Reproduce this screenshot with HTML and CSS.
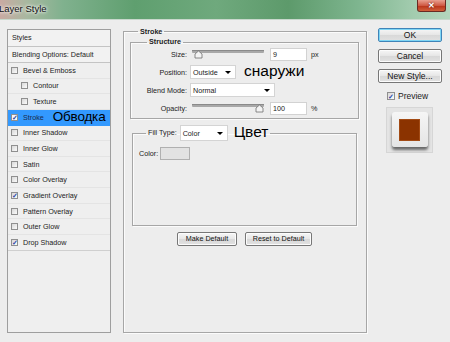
FILE: index.html
```html
<!doctype html>
<html>
  <head>
    <title>Layer Style</title>
    <link rel="stylesheet" href="styles.css">
  </head>
  <body>
    <div class="titlebar">
      <span class="title">Layer Style</span>
      <div class="close">&#x2715;</div>
    </div>

    <div class="content">
      <!--STYLES LIST-->
      <div class="styles-list">
        <div class="list-head">Styles</div>
        <div class="list-head">Blending Options: Default</div>
        <div class="item"><span class="check"></span>Bevel &amp; Emboss</div>
        <div class="item sub"><span class="check"></span>Contour</div>
        <div class="item sub"><span class="check"></span>Texture</div>
        <div class="item selected"><span class="check on">&#x2713;</span>Stroke<span class="note note-stroke">Обводка</span></div>
        <div class="item"><span class="check"></span>Inner Shadow</div>
        <div class="item"><span class="check"></span>Inner Glow</div>
        <div class="item"><span class="check"></span>Satin</div>
        <div class="item"><span class="check"></span>Color Overlay</div>
        <div class="item"><span class="check on">&#x2713;</span>Gradient Overlay</div>
        <div class="item"><span class="check"></span>Pattern Overlay</div>
        <div class="item"><span class="check"></span>Outer Glow</div>
        <div class="item last"><span class="check on">&#x2713;</span>Drop Shadow</div>
      </div>

      <!--SETTINGS-->
      <fieldset class="group outer">
        <legend class="outer-legend">Stroke</legend>

        <fieldset class="group structure">
          <legend>Structure</legend>
          <div class="row">
            <span class="label">Size:</span>
            <svg class="slider" width="72" height="10" viewBox="0 0 72 10">
              <rect x="0" y="1" width="72" height="3" rx="1" fill="#a8a8a8"/>
              <rect x="0" y="1" width="72" height="1" fill="#8a8a8a"/>
              <polygon points="3,9 3,5 6.5,2 10,5 10,9" fill="#f4f4f4" stroke="#707070" stroke-width="0.8"/>
            </svg>
            <span class="field">9</span>
            <span class="unit">px</span>
          </div>
          <div class="row">
            <span class="label">Position:</span>
            <span class="select select-pos">Outside<span class="arrow"></span></span>
            <span class="note note-pos">снаружи</span>
          </div>
          <div class="row">
            <span class="label">Blend Mode:</span>
            <span class="select select-blend">Normal<span class="arrow"></span></span>
          </div>
          <div class="row">
            <span class="label">Opacity:</span>
            <svg class="slider" width="72" height="10" viewBox="0 0 72 10">
              <rect x="0" y="1" width="72" height="3" rx="1" fill="#a8a8a8"/>
              <rect x="0" y="1" width="72" height="1" fill="#8a8a8a"/>
              <polygon points="64,9 64,5 67.5,2 71,5 71,9" fill="#f4f4f4" stroke="#707070" stroke-width="0.8"/>
            </svg>
            <span class="field">100</span>
            <span class="unit">%</span>
          </div>
        </fieldset>

        <fieldset class="group fill">
          <legend>
            <span class="legend-label">Fill Type:</span>
            <span class="select select-fill">Color<span class="arrow"></span></span>
            <span class="note note-fill">Цвет</span>
          </legend>
          <div class="fill-body">
            <div class="color-row">
              <span>Color:</span>
              <span class="swatch"></span>
            </div>
          </div>
        </fieldset>

        <div class="defaults">
          <div class="btn btn-small">Make Default</div>
          <div class="btn btn-small btn-reset">Reset to Default</div>
        </div>
      </fieldset>

      <!--ACTIONS-->
      <div class="actions">
        <div class="btn btn-ok">OK</div>
        <div class="btn">Cancel</div>
        <div class="btn">New Style...</div>
        <div class="preview-check"><span class="check on">&#x2713;</span>Preview</div>
        <div class="preview">
          <div class="preview-tile"><div class="preview-color"></div></div>
        </div>
      </div>
    </div>
  </body>
</html>
```

FILE: styles.css
```css
html {
  box-sizing: border-box;
}
*, *:before, *:after {
  box-sizing: inherit;
}

html, body {
  font-family: "Liberation Sans", Arial, sans-serif;
  width: 100%;
  height: 100%;
  margin: 0;
  padding: 0;
  background-color: #ededed;
  color: #222;
  overflow: hidden;
}

/* title bar */
.titlebar {
  height: 20px;
  display: flex;
  align-items: center;
  background: linear-gradient(90deg, #c9aaa2 0%, #a8b8a0 6%, #80b18e 14%, #5f9f6f 30%, #6fa97d 48%, #5d9a6b 64%, #7fb690 80%, #a3ccaf 92%, #b4d6bd 100%);
  border-bottom: 1px solid #c8d8cc;
  position: relative;
}
.title {
  font-size: 9.5px;
  margin-left: -1px;
  margin-top: -2px;
  color: #111;
  text-shadow: 0 0 3px #fff, 0 0 4px #fff;
}
.close {
  position: absolute;
  top: 0;
  left: 417px;
  width: 29px;
  height: 12px;
  border: 1px solid #6a2a22;
  border-top: none;
  border-radius: 0 0 3px 3px;
  background: linear-gradient(#e9a090, #cf5a44 50%, #b83218 51%, #d0603c);
  color: #fff;
  font-size: 8px;
  font-weight: bold;
  line-height: 11px;
  text-align: center;
  text-shadow: 0 0 2px #5a1008;
}

/* layout */
.content {
  display: flex;
  padding: 9px 8px 0 7px;
  height: 313px;
  align-items: stretch;
}

/* styles list */
.styles-list {
  width: 104px;
  height: 304px;
  border: 1px solid #9e9e9e;
  background-color: #efefef;
  font-size: 7.2px;
  flex-shrink: 0;
}
.list-head {
  height: 16px;
  line-height: 16px;
  padding-left: 4px;
  border-bottom: 1px solid #c4c4c4;
  background-color: #f2f2f2;
}
.list-head:first-child {
  height: 17px;
  line-height: 16px;
}
.item {
  height: 15.65px;
  display: flex;
  align-items: center;
  padding-left: 3px;
  border-bottom: 1px solid #e4e4e4;
  white-space: nowrap;
}
.item.sub {
  padding-left: 13px;
}
.item.last {
  border-bottom: 1px solid #cfcfcf;
}
.item.selected {
  background-color: #3399fe;
  color: #1a2a4a;
  border-bottom-color: #3399fe;
}

.check {
  width: 7px;
  height: 7px;
  border: 1px solid #8f8f8f;
  background: linear-gradient(135deg, #d8d8d8, #fbfbfb);
  margin-right: 5px;
  font-size: 7px;
  line-height: 6px;
  color: #2c4aa8;
  text-align: center;
  font-weight: bold;
  flex-shrink: 0;
}
.selected .check {
  background: #f6f6f6;
}

.note {
  font-family: "Liberation Sans", Arial, sans-serif;
  color: #000;
  font-size: 15.5px;
  line-height: 14px;
}
.note-stroke {
  margin-left: 9px;
  font-size: 13.5px;
  letter-spacing: -0.2px;
}

/* groups */
.group {
  margin: 0;
  border: 1px solid #a6a6a6;
  box-shadow: inset 1px 1px 0 #fbfbfb, 1px 1px 0 #fbfbfb;
  min-width: 0;
}
.group > legend {
  font-size: 7.2px;
  font-weight: bold;
  line-height: 8px;
  padding: 0 2px;
}

.outer {
  width: 244px;
  margin: -2px 11px 0 12px;
  padding: 2px 7px 0 6px;
  flex-shrink: 0;
}
.group > .outer-legend {
  line-height: 9px;
  margin-left: 8px;
  padding: 0 2px;
}

.structure {
  padding: 0 0 2px 0;
}
.structure > legend {
  margin-left: 16px;
}

.row {
  height: 16px;
  display: flex;
  align-items: center;
  font-size: 7.2px;
  margin-bottom: 2px;
}
.row:last-child {
  margin-bottom: 0;
}
.label {
  width: 56px;
  text-align: right;
  margin-right: 3px;
}
.slider {
  margin-left: 2px;
  margin-right: 6px;
}
.field {
  width: 37px;
  height: 13px;
  line-height: 12px;
  background-color: #fff;
  border: 1px solid #d2d2d2;
  padding-left: 2px;
}
.unit {
  margin-left: 4px;
}

.select {
  height: 14px;
  line-height: 13px;
  background-color: #fff;
  border: 1px solid #d4d4d4;
  padding-left: 2px;
  position: relative;
  font-size: 7.2px;
  font-weight: normal;
  display: inline-block;
}
.arrow {
  position: absolute;
  right: 4px;
  top: 5px;
  width: 0;
  height: 0;
  border-left: 3px solid transparent;
  border-right: 3px solid transparent;
  border-top: 3px solid #000;
}
.select-pos {
  width: 46px;
}
.select-blend {
  width: 85px;
}
.note-pos {
  margin-left: 8px;
  margin-top: -2px;
}

/* fill */
.fill {
  margin: 6px 2px 0 2px;
  padding: 0 6px 0 6px;
}
.fill > legend {
  margin-left: 7px;
  font-weight: normal;
  line-height: 16px;
  display: flex;
  align-items: center;
}
.legend-label {
  margin-right: 3px;
}
.select-fill {
  width: 48px;
  height: 16px;
  line-height: 15px;
}
.select-fill .arrow {
  top: 6px;
}
.note-fill {
  margin-left: 6px;
  margin-top: -3px;
}
.fill-body {
  height: 84px;
  padding-top: 5px;
  font-size: 7.2px;
}
.color-row {
  display: flex;
  align-items: center;
  height: 14px;
}
.swatch {
  width: 30px;
  height: 13px;
  margin-left: 2px;
  border: 1px solid #b0b0b0;
  background-color: #e2e2e2;
}

/* buttons */
.defaults {
  display: flex;
  justify-content: center;
  gap: 8px;
  margin-top: 6px;
}
.btn {
  height: 14px;
  border: 1px solid #777;
  border-radius: 2px;
  background: linear-gradient(#f6f6f6, #e6e6e6 50%, #d8d8d8 51%, #e2e2e2);
  text-align: center;
  font-size: 8.5px;
  line-height: 12px;
  color: #111;
  box-shadow: inset 0 0 0 1px #fcfcfc;
}
.btn-small {
  width: 60px;
  font-size: 7.2px;
}
.btn-reset {
  width: 67px;
}

.actions {
  width: 64px;
  margin-top: -1px;
  display: flex;
  flex-direction: column;
  gap: 6px;
  flex-shrink: 0;
}
.btn-ok {
  border-color: #3f84b8;
  box-shadow: inset 0 0 0 1px #7fd6f5;
  margin-bottom: 1px;
}
.preview-check {
  display: flex;
  align-items: center;
  height: 14px;
  padding-left: 9px;
  font-size: 8.5px;
}
.preview-check .check {
  margin-right: 3px;
  width: 8px;
  height: 8px;
  line-height: 7px;
}
.preview {
  width: 47px;
  height: 46px;
  margin: -2px 0 0 8px;
  border: 1px solid #d6d6d6;
  background-color: #e4e4e4;
  display: flex;
  justify-content: center;
  padding-top: 4px;
}
.preview-tile {
  width: 36px;
  height: 35px;
  border-radius: 3px;
  background: linear-gradient(#f6f6f6, #e4e4e4);
  box-shadow: 0 3px 3px rgba(0, 0, 0, 0.55);
  display: flex;
  align-items: center;
  justify-content: center;
}
.preview-color {
  width: 21px;
  height: 22px;
  background-color: #8b3300;
  border: 1px solid #a24a14;
}
```
